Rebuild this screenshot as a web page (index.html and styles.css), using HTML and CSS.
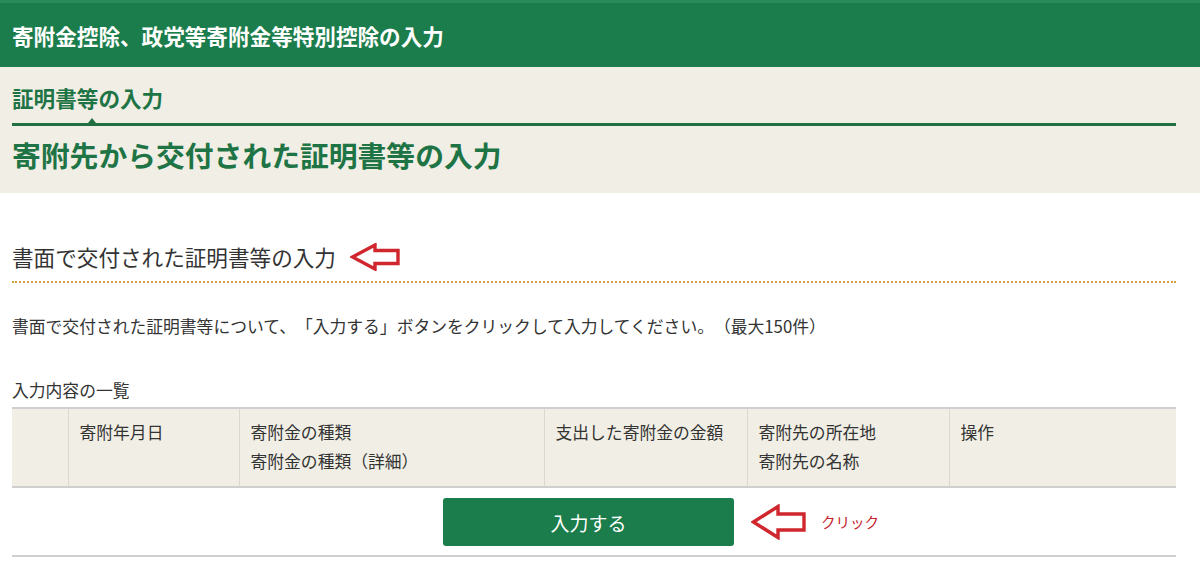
FILE: index.html
```html
<!DOCTYPE html>
<html lang="ja">
<head>
<meta charset="utf-8">
<title>寄附金控除の入力</title>
<link rel="stylesheet" href="styles.css">
</head>
<body>
<header class="app-header">
  <h1 class="app-title">寄附金控除、政党等寄附金等特別控除の入力</h1>
</header>
<section class="step-area">
  <div class="step-name">証明書等の入力</div>
  <div class="step-rule"></div>
  <h2 class="page-title">寄附先から交付された証明書等の入力</h2>
</section>
<main class="content">
  <div class="section-head">
    <h3 class="section-title">書面で交付された証明書等の入力</h3>
    <svg class="arrow arrow-head" width="50" height="28" viewBox="0 0 50 28" aria-hidden="true">
      <path d="M2.5,14 L25,2 L25,7.5 L48,7.5 L48,20.5 L25,20.5 L25,26 Z" fill="#fff" stroke="#d0262d" stroke-width="3.4" stroke-linejoin="miter"/>
    </svg>
  </div>
  <p class="lead">書面で交付された証明書等について、「入力する」ボタンをクリックして入力してください。（最大150件）</p>
  <div class="list-caption">入力内容の一覧</div>
  <table class="list">
    <thead>
      <tr>
        <th class="c0"></th>
        <th class="c1">寄附年月日</th>
        <th class="c2">寄附金の種類<br>寄附金の種類（詳細）</th>
        <th class="c3">支出した寄附金の金額</th>
        <th class="c4">寄附先の所在地<br>寄附先の名称</th>
        <th class="c5">操作</th>
      </tr>
    </thead>
  </table>
  <div class="action-row">
    <button class="btn-primary" type="button">入力する</button>
    <svg class="arrow arrow-click" width="56" height="36" viewBox="0 0 56 36" aria-hidden="true">
      <path d="M2.5,18 L27,2.5 L27,10 L53,10 L53,26 L27,26 L27,33.5 Z" fill="#fff" stroke="#d0262d" stroke-width="3.4" stroke-linejoin="miter"/>
    </svg>
    <span class="click-note">クリック</span>
  </div>
</main>
</body>
</html>
```
FILE: styles.css
```css
* { box-sizing: border-box; }

body {
  margin: 0;
  font-family: "Noto Sans CJK JP", "Noto Sans", sans-serif;
  color: #333;
  background: #fff;
  text-spacing-trim: space-all;
}

.app-header {
  height: 67px;
  background: #1b7d4b;
  border-top: 3px solid #2a8a58;
  display: flex;
  align-items: center;
  padding: 0 12px;
}

.app-title {
  margin: 0;
  color: #fff;
  font-size: 21.6px;
  font-weight: 700;
  line-height: 30px;
  padding-top: 1px;
}

.step-area {
  background: #f1efe5;
  padding: 16px 24px 20px 12px;
}

.step-name {
  color: #1f7445;
  font-size: 21.6px;
  font-weight: 700;
  line-height: 30px;
}

.step-rule {
  position: relative;
  margin-top: 10px;
  height: 3px;
  background: #216e43;
}

.step-rule::before {
  content: "";
  position: absolute;
  left: 76px;
  top: -5px;
  border-left: 4px solid transparent;
  border-right: 4px solid transparent;
  border-bottom: 5px solid #216e43;
}

.page-title {
  margin: 11px 0 0;
  color: #1f7445;
  font-size: 28.8px;
  font-weight: 700;
  line-height: 36px;
}

.content {
  padding: 0 24px 0 12px;
}

.section-head {
  margin-top: 48px;
  display: flex;
  align-items: center;
  gap: 14px;
  padding-bottom: 8px;
  border-bottom: 2px dotted #d6a13c;
}

.section-title {
  margin: 0;
  font-size: 21.6px;
  font-weight: 400;
  line-height: 32px;
  color: #333;
}

.arrow { display: block; flex: none; }

.lead {
  margin: 30px 0 0;
  font-size: 16.8px;
  line-height: 26px;
}

.list-caption {
  margin-top: 38px;
  font-size: 16.8px;
  line-height: 26px;
}

.list {
  margin-top: 4px;
  width: 100%;
  border-collapse: collapse;
  table-layout: fixed;
  border-top: 2px solid #cfcfcf;
  border-bottom: 2px solid #cfcfcf;
}

.list th {
  background: #f1efe5;
  text-align: left;
  vertical-align: top;
  font-weight: 400;
  font-size: 16.8px;
  line-height: 29px;
  padding: 9px 10px 10px 11px;
  height: 77px;
  border-left: 1px solid #dbd8cd;
  color: #333;
}

.list th:first-child { border-left: none; }

.list .c0 { width: 56px; }
.list .c1 { width: 171px; }
.list .c2 { width: 305px; }
.list .c3 { width: 203px; }
.list .c4 { width: 202px; }
.list .c5 { width: 227px; }

.action-row {
  display: flex;
  align-items: center;
  padding: 10px 0 9px 431px;
  border-bottom: 2px solid #cfcfcf;
}

.btn-primary {
  width: 291px;
  height: 48px;
  background: #1b7d4b;
  color: #fff;
  border: none;
  border-radius: 3px;
  font-family: inherit;
  font-size: 19px;
  padding: 0;
}

.arrow-click {
  margin-left: 17px;
}

.click-note {
  margin-left: 14px;
  color: #c3212b;
  font-size: 14.5px;
  line-height: 20px;
}
```
